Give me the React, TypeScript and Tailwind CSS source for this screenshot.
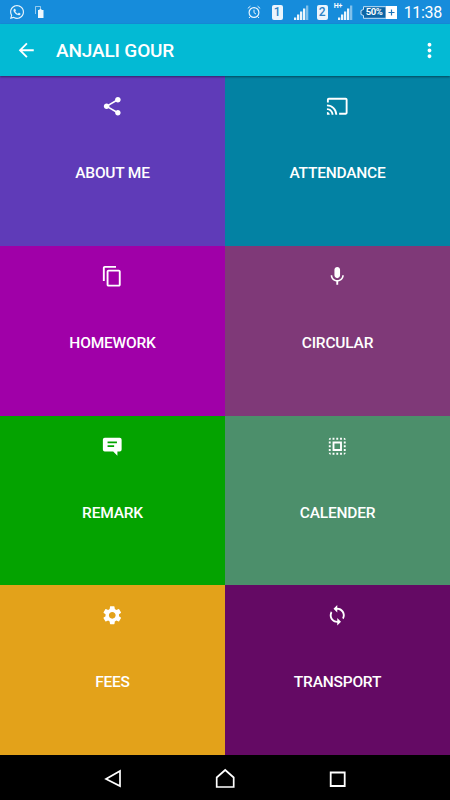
import type { ReactNode } from "react";
import {
  MdArrowBack,
  MdCast,
  MdContentCopy,
  MdMic,
  MdMoreVert,
  MdSelectAll,
  MdSettings,
  MdShare,
  MdSync,
} from "react-icons/md";
import { FaWhatsapp } from "react-icons/fa";

function RemarkIcon() {
  return (
    <svg width="22.5" height="22.5" viewBox="0 0 24 24" fill="currentColor" aria-hidden="true">
      <path
        fillRule="evenodd"
        d="M4 3h16a2 2 0 0 1 2 2v10.500a2 2 0 0 1-2 2h-2.500V22l-4.500-4.500H4a2 2 0 0 1-2-2V5c0-1.100.9-2 2-2zM7 7v1.800h10V7zM7 11v1.800h7V11z"
      />
    </svg>
  );
}

const tiles: { label: string; color: string; icon: ReactNode }[] = [
  { label: "ABOUT ME", color: "bg-[#5f3bb8]", icon: <MdShare size={22.5} /> },
  { label: "ATTENDANCE", color: "bg-[#0382a3]", icon: <MdCast size={22.5} /> },
  { label: "HOMEWORK", color: "bg-[#a000a8]", icon: <MdContentCopy size={22.5} /> },
  { label: "CIRCULAR", color: "bg-[#7f3978]", icon: <MdMic size={22.5} /> },
  { label: "REMARK", color: "bg-[#04a300]", icon: <RemarkIcon /> },
  { label: "CALENDER", color: "bg-[#4c8f6b]", icon: <MdSelectAll size={22.5} /> },
  { label: "FEES", color: "bg-[#e3a21a]", icon: <MdSettings size={22.5} /> },
  { label: "TRANSPORT", color: "bg-[#640a64]", icon: <MdSync size={22.5} /> },
];

function CopyStatusIcon() {
  return (
    <svg className="ml-[10px]" width="9" height="13" viewBox="0 0 9 13" aria-hidden="true">
      <path d="M.5 8V.5h5V3" fill="none" stroke="#fff" strokeOpacity=".55" />
      <path d="M3 4h1.500V3h2v1H8.500v8H3z" fill="#fff" fillOpacity=".93" />
    </svg>
  );
}

function AlarmIcon() {
  return (
    <svg width="14" height="14" viewBox="0 0 14 14" fill="none" stroke="#e8f4fd" aria-hidden="true">
      <circle cx="7" cy="7.500" r="4.900" strokeWidth="1.200" />
      <path d="M7 4.700v3l2 1.400M.8 3.400 3.400 1.200M13.200 3.400l-2.600-2.200M3.300 11.500 2 13M10.700 11.500 12 13" />
    </svg>
  );
}

function SimBadge({ slot }: { slot: string }) {
  return (
    <span className="flex h-[15px] w-[11px] items-center justify-center rounded-[2px] bg-[#eaf5fd] text-[12px] leading-none font-medium text-[#2b82c6]">
      {slot}
    </span>
  );
}

function SignalBars() {
  return (
    <svg width="15" height="15" viewBox="0 0 15 15" fill="#fff" aria-hidden="true">
      <path d="M0 12.500h2.300V15H0zM3 9.500h2.300V15H3zM6 6.500h2.300V15H6zM9 3.500h2.300V15H9z" fillOpacity=".92" />
      <path d="M12 .5h2.300V15H12z" fillOpacity=".45" />
    </svg>
  );
}

function Battery() {
  return (
    <span className="relative flex h-[13px] w-[37px] items-center">
      <svg className="absolute inset-0" width="37" height="13" viewBox="0 0 37 13" aria-hidden="true">
        <path d="M3.500.7H26v11.600H3.500V9.500L1 8.500v-4l2.500-1z" fill="#0d65a5" stroke="#c5e2f7" />
        <path d="M26 0h11v13H26z" fill="#fff" />
        <path d="M31.500 3.500v6M28.500 6.500h6" stroke="#1c75ba" strokeWidth="1.200" />
      </svg>
      <span className="relative ml-[6px] text-[9.500px] leading-none font-bold tracking-[-0.400px]">50%</span>
    </span>
  );
}

function StatusBar() {
  return (
    <div className="flex h-6 shrink-0 items-center bg-[#168cdb] pr-[8px] pl-[9px] text-white">
      <FaWhatsapp size={16} className="opacity-90" />
      <CopyStatusIcon />
      <div className="ml-auto flex items-center">
        <AlarmIcon />
        <div className="ml-[11px]">
          <SimBadge slot="1" />
        </div>
        <div className="ml-[11px]">
          <SignalBars />
        </div>
        <div className="ml-[8px]">
          <SimBadge slot="2" />
        </div>
        <div className="relative ml-[10px]">
          <SignalBars />
          <span className="absolute -top-[2px] -left-[4px] text-[7px] leading-none font-bold">H+</span>
        </div>
        <div className="ml-[7px]">
          <Battery />
        </div>
        <span className="mt-[1px] ml-[7px] text-[16px] leading-none tracking-[-0.300px]">11:38</span>
      </div>
    </div>
  );
}

function NavBar() {
  return (
    <div className="flex h-[45px] shrink-0 items-center justify-between bg-black px-[103px]">
      <svg width="20" height="22" viewBox="0 0 20 22" fill="none" stroke="#fff" strokeWidth="1.700" aria-hidden="true">
        <path d="M17 4v15L3 12z" />
      </svg>
      <svg width="20" height="22" viewBox="0 0 20 22" fill="none" stroke="#fff" strokeWidth="1.700" aria-hidden="true">
        <path d="M1.700 20V10.500L10.200 3l8.500 7.500V20z" />
      </svg>
      <svg width="20" height="22" viewBox="0 0 20 22" fill="none" stroke="#fff" strokeWidth="1.800" aria-hidden="true">
        <path d="M3.700 5.500h14v13.500h-14z" />
      </svg>
    </div>
  );
}

export default function App() {
  return (
    <div className="flex h-[800px] w-[450px] flex-col overflow-hidden bg-black font-[Roboto,sans-serif]">
      <StatusBar />
      <header className="relative flex h-[52px] shrink-0 items-center bg-[#03bad4] pr-[9px] pl-[15px] text-white shadow-[0_1px_2px_rgba(0,0,0,0.45)]">
        <MdArrowBack size={22.5} />
        <h1 className="mt-[2px] ml-[18.500px] text-[19px] font-medium tracking-[-0.150px]">ANJALI GOUR</h1>
        <MdMoreVert size={23} className="ml-auto" />
      </header>
      <main className="grid min-h-0 flex-1 grid-cols-2 grid-rows-4">
        {tiles.map((t) => (
          <div key={t.label} className={`flex flex-col items-center pt-[19px] text-white ${t.color}`}>
            {t.icon}
            <span className="mt-[44.500px] text-[15.500px] leading-[22px] font-medium tracking-[-0.200px]">{t.label}</span>
          </div>
        ))}
      </main>
      <NavBar />
    </div>
  );
}
